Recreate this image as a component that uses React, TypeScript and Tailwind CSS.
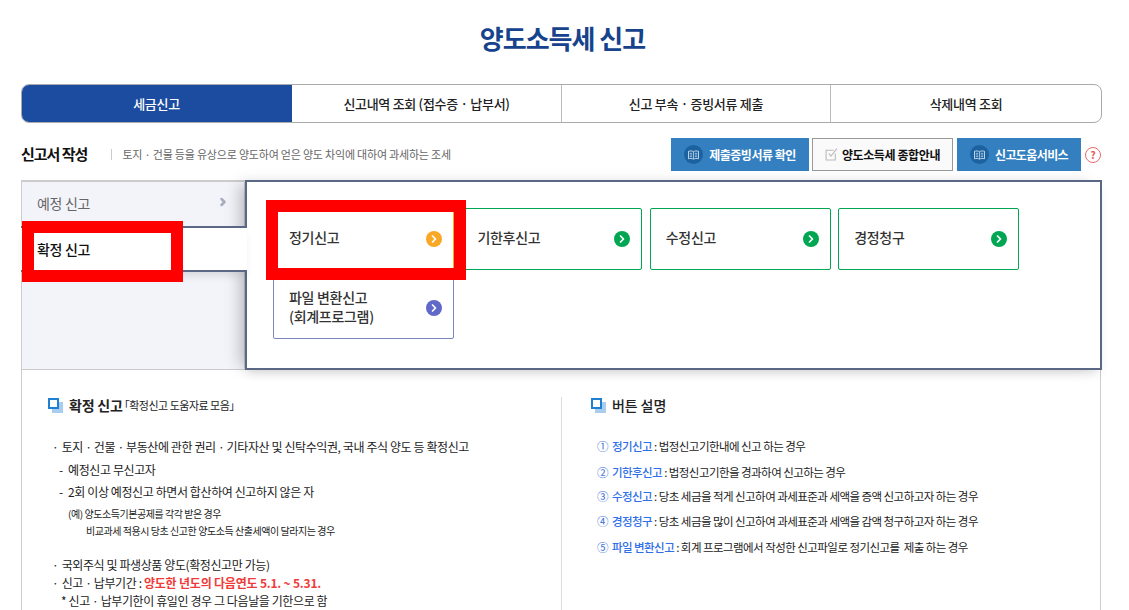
import { ChevronRight } from "lucide-react";

const font = { fontFamily: '"Noto Sans CJK KR", "Noto Sans", sans-serif' };

function BookIcon() {
  return (
    <span className="flex h-[19px] w-[19px] shrink-0 items-center justify-center rounded-full bg-[#1c62a0]">
      <svg viewBox="0 0 14 12" className="h-[10px] w-[13px]" fill="none" stroke="#dbe9f5" strokeWidth="1">
        <path d="M7 2 C5.5 1 3 1 1 1.500 V10.500 C3 10 5.500 10 7 11 C8.500 10 11 10 13 10.500 V1.500 C11 1 8.500 1 7 2 Z" />
        <path d="M7 2 V11 M2.500 4 H5.500 M2.500 6 H5.500 M2.500 8 H5.500 M8.500 4 H11.500 M8.500 6 H11.500 M8.500 8 H11.500" strokeWidth="0.8" />
      </svg>
    </span>
  );
}

function SquareBullet() {
  return (
    <span className="relative mr-[6px] inline-block h-[15px] w-[15px] shrink-0">
      <span className="absolute left-[4px] top-[4px] h-[11px] w-[11px] bg-[#a9cdee]" />
      <span className="absolute left-0 top-0 h-[11px] w-[11px] border-[2px] border-[#1f7fd0] bg-white" />
    </span>
  );
}

function FilingCard({ children, border, dot, single = false }: { children: React.ReactNode; border: string; dot: string; single?: boolean }) {
  return (
    <div className={`flex h-[62px] w-[180.8px] items-center justify-between rounded-[2px] border pl-[15px] pr-[11px] text-[14px] font-medium leading-[19px] text-[#333] ${border}`}>
      <span className={`tracking-[-0.3px] ${single ? "-mt-[4px]" : "-mt-[2px]"}`}>{children}</span>
      <span className={`flex h-4 w-4 items-center justify-center rounded-full ${dot}`}>
        <ChevronRight className="h-3 w-3 text-white" strokeWidth={3.5} />
      </span>
    </div>
  );
}

const buttonHelp = [
  ["①", "정기신고", " : 법정신고기한내에 신고 하는 경우", ""],
  ["②", "기한후신고", " : 법정신고기한을 경과하여 신고하는 경우", "mt-[1px]"],
  ["③", "수정신고", " : 당초 세금을 적게 신고하여 과세표준과 세액을 증액 신고하고자 하는 경우", "-mt-[1px]"],
  ["④", "경정청구", " : 당초 세금을 많이 신고하여 과세표준과 세액을 감액 청구하고자 하는 경우", ""],
  ["⑤", "파일 변환신고", " : 회계 프로그램에서 작성한 신고파일로 정기신고를  제출 하는 경우", "mt-[1px]"],
];

export default function App() {
  return (
    <div className="h-[610px] overflow-hidden bg-white" style={font}>
      <h1 className="pr-[4px] pt-[20px] text-center text-[26px] font-bold leading-[36px] tracking-[-1px] text-[#16438c]">
        양도소득세 신고
      </h1>

      <div className="ml-[21px] w-[1081px]">
        {/* top tabs */}
        <div className="mt-[28px] flex h-[39px] overflow-hidden rounded-[8px] border border-[#aaa] text-[13px] font-medium tracking-[-0.3px] text-[#222]">
          <div className="-m-px flex w-[271px] items-center justify-center bg-[#1c4ca0] text-white">세금신고</div>
          <div className="ml-px flex w-[270px] items-center justify-center border-r border-[#bbb]">신고내역 조회 (접수증 · 납부서)</div>
          <div className="flex w-[269px] items-center justify-center border-r border-[#bbb]">신고 부속 · 증빙서류 제출</div>
          <div className="flex flex-1 items-center justify-center">삭제내역 조회</div>
        </div>

        {/* section title row */}
        <div className="mt-[15px] flex h-[33px] items-center">
          <span className="text-[15px] font-bold tracking-[-1px] text-[#111]">신고서 작성</span>
          <span className="ml-[24px] mr-[10px] h-[11px] w-px bg-[#ccc]" />
          <span className="text-[11px] tracking-[-0.2px] text-[#666]">토지 · 건물 등을 유상으로 양도하여 얻은 양도 차익에 대하여 과세하는 조세</span>
          <div className="ml-auto flex items-center">
            <div className="flex h-[33px] w-[138px] items-center justify-center gap-[6px] bg-[#337fc0] text-[12px] font-bold tracking-[-0.5px] text-white">
              <BookIcon />
              제출증빙서류 확인
            </div>
            <div className="ml-[3px] flex h-[33px] w-[141px] items-center justify-center gap-[4px] border border-[#999] bg-[#fafafa] text-[12px] font-bold tracking-[-0.4px] text-[#111]">
              <svg viewBox="0 0 12 12" className="h-[13px] w-[13px]" fill="none" stroke="#bbb" strokeWidth="1">
                <path d="M9.500 5 V11 H1 V2 H8" />
                <path d="M3.500 5 L5.500 7.500 L11 0.500" />
              </svg>
              양도소득세 종합안내
            </div>
            <div className="ml-[4px] flex h-[33px] w-[124px] items-center justify-center gap-[6px] bg-[#337fc0] text-[12px] font-bold tracking-[-0.6px] text-white">
              <BookIcon />
              신고도움서비스
            </div>
            <span className="ml-[4px] mr-[1px] flex h-4 w-4 items-center justify-center rounded-full border-[1.5px] border-[#e86a6a] text-[10px] font-bold text-[#e25555]">?</span>
          </div>
        </div>

        {/* filing type panel */}
        <div className="relative mt-[9px] flex h-[190px] w-[1081px]">
          <div className="w-[224px] shrink-0">
            <div className="h-full border-x border-b border-t-2 border-[#ccc] bg-[#f2f4fa]">
              <div className="flex h-[44px] items-center justify-between pl-[15px] pr-[15px] text-[14px] text-[#666]">
                <span className="-mt-[1px] tracking-[-0.3px]">예정 신고</span>
                <ChevronRight className="-mt-[4px] h-[12px] w-[12px] text-[#a8acc0]" strokeWidth={5} />
              </div>
            </div>
            {/* selected tab sits over the panel border */}
            <div className="absolute left-0 top-[46px] z-20 flex h-[46px] w-[226px] items-center border-y-[2px] border-y-[#5a6785] bg-white pl-[16px] text-[14px] font-medium tracking-[-0.3px] text-[#111] shadow-[0_6px_10px_-4px_rgba(0,0,0,0.15)]">
              확정 신고
            </div>
          </div>
          <div className="relative z-10 flex-1 border-[2px] border-[#5a6785] bg-white pl-[26px] pt-[26px] shadow-[-10px_0_14px_-4px_rgba(0,0,0,0.2),0_6px_10px_-3px_rgba(0,0,0,0.12)]">
            <div className="flex gap-[7.6px]">
              <FilingCard single border="border-[#f9a825]" dot="bg-[#f9a825]">정기신고</FilingCard>
              <FilingCard single border="border-[#00a651]" dot="bg-[#00a651]">기한후신고</FilingCard>
              <FilingCard single border="border-[#00a651]" dot="bg-[#00a651]">수정신고</FilingCard>
              <FilingCard single border="border-[#00a651]" dot="bg-[#00a651]">경정청구</FilingCard>
            </div>
            <div className="mt-[7px]">
              <FilingCard border="border-[#7d86bd]" dot="bg-[#6068c8]">
                파일 변환신고
                <br />
                (회계프로그램)
              </FilingCard>
            </div>
          </div>

          {/* red review marks lying over the tabs */}
          <div className="absolute left-[1px] top-[41px] z-30 h-[61px] w-[161px] border-[12px] border-[#ff0000]" />
          <div className="absolute left-[245px] top-[20px] z-30 h-[80px] w-[200px] border-[12px] border-[#ff0000]" />
        </div>

        {/* notes */}
        <div className="flex h-[240px] w-[1080px] border-x border-[#ccc] pt-[27px]">
          <div className="h-full w-[539px] pl-[26px] text-[12px] tracking-[-0.4px] text-[#222]">
            <div className="flex h-[17px] items-center text-[14px] font-bold text-[#222]">
              <SquareBullet />
              <span className="tracking-[-0.2px]">확정 신고</span>
              <span className="-ml-[4px] text-[11px] font-normal tracking-[-0.5px]">「확정신고 도움자료 모음」</span>
            </div>
            <p className="ml-[4px] mt-[24px] leading-[18px]">
              <span className="mr-[1px]">·</span> 토지 · 건물 · 부동산에 관한 권리 · 기타자산 및 신탁수익권, 국내 주식 양도 등 확정신고
            </p>
            <p className="ml-[11px] mt-[5px] leading-[18px]">
              <span className="mr-[3px]">-</span> 예정신고 무신고자
            </p>
            <p className="ml-[11px] mt-[4px] leading-[18px]">
              <span className="mr-[3px]">-</span> 2회 이상 예정신고 하면서 합산하여 신고하지 않은 자
            </p>
            <p className="ml-[20px] mt-[5px] text-[10px] leading-[16px] tracking-[-0.45px]">(예) 양도소득기본공제를 각각 받은 경우</p>
            <p className="ml-[38px] mt-[1px] text-[10px] leading-[16px] tracking-[-0.45px]">비교과세 적용시 당초 신고한 양도소득 산출세액이 달라지는 경우</p>
            <p className="ml-[4px] mt-[17px] leading-[18px]">
              <span className="mr-[1px]">·</span> 국외주식 및 파생상품 양도(확정신고만 가능)
            </p>
            <p className="ml-[4px] leading-[18px]">
              <span className="mr-[1px]">·</span> 신고 · 납부기간 : <span className="font-bold tracking-[-0.2px] text-[#f03a3a]">양도한 년도의 다음연도 5.1. ~ 5.31.</span>
            </p>
            <p className="ml-[13px] leading-[18px]">* 신고 · 납부기한이 휴일인 경우 그 다음날을 기한으로 함</p>
          </div>
          <div className="h-full flex-1 border-l border-[#ddd] pl-[29px] text-[11.500px] tracking-[-0.55px] text-[#222]">
            <div className="flex h-[17px] items-center text-[14px] font-medium tracking-[-0.1px]">
              <SquareBullet />
              <span>버튼 설명</span>
            </div>
            <div className="ml-[6px] mt-[20px]">
              {buttonHelp.map(([num, name, desc, gap]) => (
                <p key={num} className={`flex h-[25px] items-center whitespace-pre ${gap}`}>
                  <span className="mr-[4px] text-[#3b6fd8]">{num}</span>
                  <span className="font-medium text-[#2f6fe8]">{name}</span>
                  {desc}
                </p>
              ))}
            </div>
          </div>
        </div>
      </div>
    </div>
  );
}
